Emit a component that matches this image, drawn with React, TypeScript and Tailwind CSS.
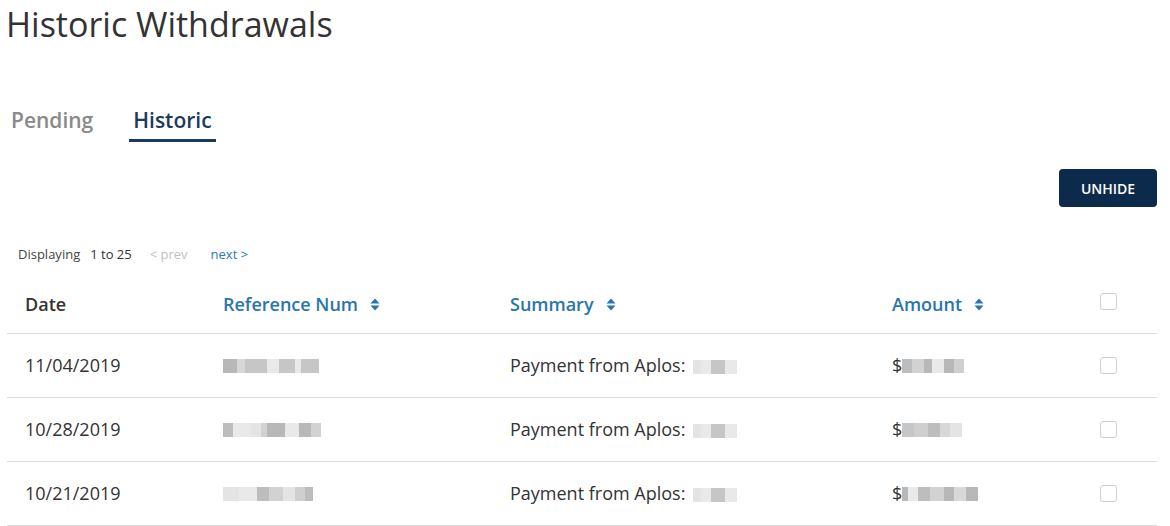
import type { ReactNode } from "react";

const rows = [
  { date: "11/04/2019", ref: [14, 8, 22, 12, 16, 6, 18], amt: [10, 12, 8, 12, 10, 10] },
  { date: "10/28/2019", ref: [10, 18, 10, 6, 18, 14, 12, 10], amt: [12, 14, 12, 10, 12] },
  { date: "10/21/2019", ref: [16, 18, 12, 14, 12, 10, 8], amt: [6, 10, 12, 14, 10, 12, 12] },
];

const shades = ["#e4e4e4", "#cfcfcf", "#bdbdbd", "#d8d8d8", "#c6c6c6", "#e9e9e9", "#b8b8b8", "#d2d2d2"];

function Blur({ widths }: { widths: number[] }) {
  return (
    <span className="inline-flex h-[14px] blur-[0.6px] align-middle">
      {widths.map((w, i) => (
        <span key={i} className="h-full" style={{ width: w, background: shades[(i * 3 + w) % shades.length] }} />
      ))}
    </span>
  );
}

function SortIcon() {
  return (
    <svg width="10" height="13" viewBox="0 0 10 13" className="ml-[12px] inline-block">
      <path d="M5 0.5 L9.5 5.5 H0.5 Z" fill="currentColor" />
      <path d="M5 12.5 L9.5 7.5 H0.5 Z" fill="currentColor" />
    </svg>
  );
}

function Checkbox() {
  return <span className="block w-[17px] h-[17px] rounded-[3px] border border-[#cfcfcf] bg-white" />;
}

function Cell({ children, className = "" }: { children?: ReactNode; className?: string }) {
  return <div className={`flex items-center pl-[18px] ${className}`}>{children}</div>;
}

export default function App() {
  return (
    <div className="w-full h-[526px] overflow-hidden bg-white font-['Open_Sans',sans-serif] text-[#333]">
      {/* Title */}
      <h1 className="pl-[6px] pt-[1px] text-[34px] leading-[46px] font-normal text-[#333]">Historic Withdrawals</h1>

      {/* Tabs */}
      <div className="mt-[59px] flex gap-[32px] pl-[7px]">
        <div className="px-[4px] pb-[5px] border-b-[3px] border-transparent text-[21px] leading-[28px] font-semibold text-[#8a8a8a]">
          Pending
        </div>
        <div className="px-[4px] pb-[5px] border-b-[3px] border-[#1c3a5e] text-[21px] leading-[28px] font-semibold text-[#1c3a5e]">
          Historic
        </div>
      </div>

      {/* Actions */}
      <div className="mt-[27px] flex justify-end pr-[13px]">
        <button className="w-[98px] h-[38px] rounded-[4px] bg-[#0c2a4b] text-white text-[14px] font-semibold">
          UNHIDE
        </button>
      </div>

      {/* Pagination */}
      <div className="mt-[39px] flex items-center pl-[18px] text-[13px] leading-[16px]">
        <span className="text-[#444]">Displaying</span>
        <span className="ml-[10px] text-[#333]">1 to 25</span>
        <span className="ml-[18px] text-[#c0c0c0]">&lt; prev</span>
        <span className="ml-[23px] text-[#2a7ab8]">next &gt;</span>
      </div>

      {/* Table */}
      <div className="mt-[13px] ml-[7px] w-[1150px]">
        <div className="grid grid-cols-[198px_287px_382px_208px_75px] h-[59px] border-b border-[#dcdcdc] text-[18px] font-semibold">
          <Cell className="text-[#333]">Date</Cell>
          <Cell className="text-[#2876ab]">
            Reference Num
            <SortIcon />
          </Cell>
          <Cell className="text-[#2876ab]">
            Summary
            <SortIcon />
          </Cell>
          <Cell className="text-[#2876ab]">
            Amount
            <SortIcon />
          </Cell>
          <Cell className="pb-[6px]">
            <Checkbox />
          </Cell>
        </div>
        {rows.map((r) => (
          <div
            key={r.date}
            className="grid grid-cols-[198px_287px_382px_208px_75px] h-[64px] border-b border-[#dcdcdc] text-[18px] text-[#333]"
          >
            <Cell>{r.date}</Cell>
            <Cell>
              <Blur widths={r.ref} />
            </Cell>
            <Cell>
              Payment from Aplos:&nbsp;
              <span className="ml-[3px]">
                <Blur widths={[8, 10, 14, 12]} />
              </span>
            </Cell>
            <Cell>
              $<Blur widths={r.amt} />
            </Cell>
            <Cell>
              <Checkbox />
            </Cell>
          </div>
        ))}
      </div>
    </div>
  );
}
